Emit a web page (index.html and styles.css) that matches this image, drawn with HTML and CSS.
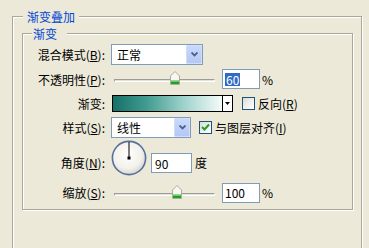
FILE: index.html
```html
<!DOCTYPE html>
<html lang="zh-CN">
<head>
    <meta charset="UTF-8">
    <title>渐变叠加</title>
    <link rel="stylesheet" href="styles.css">
</head>
<body>

    <fieldset class="group outer">
        <legend>渐变叠加</legend>

        <fieldset class="group inner">
            <legend>渐变</legend>

            <div class="form">
                <!-- 混合模式 -->
                <label class="lbl">混合模式(<u>B</u>):</label>
                <div class="ctl">
                    <div class="combo combo-blend">
                        <span class="combo-text">正常</span>
                        <span class="combo-btn">
                            <svg width="7" height="5" viewBox="0 0 7 5"><polyline points="0.5,0.5 3.5,3.5 6.5,0.5" fill="none" stroke="#4d6185" stroke-width="1.8"/></svg>
                        </span>
                    </div>
                </div>

                <!-- 不透明性 -->
                <label class="lbl">不透明性(<u>P</u>):</label>
                <div class="ctl">
                    <div class="slider">
                        <div class="track"></div>
                        <svg class="thumb thumb-opacity" width="10" height="14" viewBox="0 0 10 14">
                            <path d="M0.5,5 L5,0.5 L9.5,5 L9.5,13.5 L0.5,13.5 Z" fill="#f7f6f1" stroke="#a8ae9f"/>
                            <rect x="1" y="9" width="8" height="1.5" fill="#8fdc8f"/>
                            <rect x="1" y="10.5" width="8" height="2.5" fill="#21a121"/>
                        </svg>
                    </div>
                    <div class="edit"><span class="sel">60</span></div>
                    <span class="unit">%</span>
                </div>

                <!-- 渐变 -->
                <label class="lbl">渐变:</label>
                <div class="ctl">
                    <div class="grad">
                        <div class="grad-fill"></div>
                        <div class="grad-btn">
                            <svg width="5" height="3" viewBox="0 0 5 3"><path d="M0,0 L5,0 L2.5,3 Z" fill="#000"/></svg>
                        </div>
                    </div>
                    <span class="check"></span>
                    <span class="check-text">反向(<u>R</u>)</span>
                </div>

                <!-- 样式 -->
                <label class="lbl">样式(<u>S</u>):</label>
                <div class="ctl">
                    <div class="combo combo-style">
                        <span class="combo-text">线性</span>
                        <span class="combo-btn">
                            <svg width="7" height="5" viewBox="0 0 7 5"><polyline points="0.5,0.5 3.5,3.5 6.5,0.5" fill="none" stroke="#4d6185" stroke-width="1.8"/></svg>
                        </span>
                    </div>
                    <span class="check check-on">
                        <svg width="11" height="11" viewBox="0 0 11 11"><polyline points="2,5 4.5,7.5 9,2.5" fill="none" stroke="#21a121" stroke-width="2"/></svg>
                    </span>
                    <span class="check-text">与图层对齐(<u>I</u>)</span>
                </div>

                <!-- 角度 -->
                <label class="lbl lbl-angle">角度(<u>N</u>):</label>
                <div class="ctl ctl-angle">
                    <svg class="dial" width="36" height="36" viewBox="0 0 36 36">
                        <defs>
                            <radialGradient id="dialFill" cx="45%" cy="40%" r="60%">
                                <stop offset="0" stop-color="#ffffff"/>
                                <stop offset="0.7" stop-color="#f2f1ea"/>
                                <stop offset="1" stop-color="#d9d8cf"/>
                            </radialGradient>
                        </defs>
                        <circle cx="18" cy="18" r="16.6" fill="url(#dialFill)" stroke="#56709e" stroke-width="1.6"/>
                        <line x1="18" y1="18" x2="18" y2="2" stroke="#000" stroke-width="1"/>
                        <rect x="16.5" y="16.5" width="3" height="3" fill="#000"/>
                    </svg>
                    <div class="edit edit-angle">90</div>
                    <span class="unit-deg">度</span>
                </div>

                <!-- 缩放 -->
                <label class="lbl">缩放(<u>S</u>):</label>
                <div class="ctl">
                    <div class="slider">
                        <div class="track"></div>
                        <svg class="thumb thumb-scale" width="10" height="14" viewBox="0 0 10 14">
                            <path d="M0.5,5 L5,0.5 L9.5,5 L9.5,13.5 L0.5,13.5 Z" fill="#f7f6f1" stroke="#a8ae9f"/>
                            <rect x="1" y="9" width="8" height="1.5" fill="#8fdc8f"/>
                            <rect x="1" y="10.5" width="8" height="2.5" fill="#21a121"/>
                        </svg>
                    </div>
                    <div class="edit">100</div>
                    <span class="unit">%</span>
                </div>
            </div>
        </fieldset>
    </fieldset>

</body>
</html>
```

FILE: styles.css
```css
body {
    margin: 0;
    background-color: #ece9d8;
    font-family: "Noto Sans CJK SC", "DejaVu Sans", sans-serif;
    font-size: 12px;
    line-height: 13px;
    color: #000;
    overflow: hidden;
}

u {
    text-decoration: underline;
    text-underline-offset: 1px;
}

/* group boxes */
.group {
    border: 1px solid #aca899;
    box-shadow: 1px 1px 0 #fff, inset 1px 1px 0 #fff;
    padding: 0;
    min-inline-size: 0;
}

.group legend {
    color: #0046d5;
    background-color: #ece9d8;
    line-height: 13px;
}

.outer {
    margin: 10px 7px 0 12px;
    padding-bottom: 80px;
}

.outer > legend {
    margin-left: 10px;
    padding: 0 4px;
}

.inner {
    margin: 4px 8px 0 9px;
}

.inner > legend {
    margin-left: 9px;
    padding: 0 10px 0 1px;
}

/* form grid */
.form {
    display: grid;
    grid-template-columns: 82px 1fr;
    grid-template-rows: 25px 24px 24px 25px 36px 33px;
    column-gap: 6px;
    align-items: center;
    padding-top: 2px;
}

.lbl {
    text-align: right;
    white-space: nowrap;
}

.ctl {
    display: flex;
    align-items: center;
    white-space: nowrap;
}

/* combo boxes */
.combo {
    box-sizing: border-box;
    height: 21px;
    border: 1px solid #7f9db9;
    background-color: #fff;
    display: flex;
    align-items: center;
    justify-content: space-between;
}

.combo-blend {
    width: 92px;
}

.combo-style {
    width: 80px;
}

.combo-text {
    padding-left: 5px;
}

.combo-btn {
    box-sizing: border-box;
    width: 16px;
    height: 19px;
    border: 1px solid #d2def8;
    border-radius: 1px;
    background: linear-gradient(#c9d8fc, #b4c8f6);
    display: flex;
    align-items: center;
    justify-content: center;
}

/* sliders */
.slider {
    position: relative;
    width: 101px;
    height: 14px;
    margin-left: 3px;
    margin-right: 7px;
}

.track {
    margin-top: 7px;
    height: 1px;
    border: 1px solid #9d9c99;
    border-color: #9d9c99 #fff #fff #9d9c99;
    border-radius: 1px;
    background-color: #e4e2d7;
}

.thumb {
    position: absolute;
    top: -1px;
}

.thumb-opacity {
    left: 56px;
}

.thumb-scale {
    left: 58px;
}

/* edit boxes */
.edit {
    box-sizing: border-box;
    width: 38px;
    height: 20px;
    border: 1px solid #7f9db9;
    background-color: #fff;
    padding-left: 2px;
    display: flex;
    align-items: center;
}

.sel {
    background-color: #316ac5;
    color: #fff;
    padding: 0 1px;
}

.unit {
    margin-left: 2px;
}

/* gradient picker */
.grad {
    box-sizing: border-box;
    width: 121px;
    height: 17px;
    margin-left: 1px;
    border: 1px solid #000;
    display: flex;
}

.grad-fill {
    flex: 1;
    background: linear-gradient(to right, #167068, #3f9a8f 30%, #9dd3cc 65%, #f6fbfa);
}

.grad-btn {
    width: 9px;
    border-left: 1px solid #000;
    background-color: #fff;
    display: flex;
    align-items: center;
    justify-content: center;
}

/* check boxes */
.check {
    box-sizing: border-box;
    width: 13px;
    height: 13px;
    margin-left: 9px;
    border: 1px solid #1c5180;
    background: linear-gradient(135deg, #dcdcd7, #fff);
    display: flex;
    align-items: center;
    justify-content: center;
}

.check-on {
    margin-left: 8px;
}

.check-text {
    margin-left: 3px;
}

/* angle */
.lbl-angle {
    align-self: end;
    margin-bottom: 7px;
}

.ctl-angle {
    align-self: stretch;
    align-items: flex-start;
}

.dial {
    display: block;
}

.edit-angle {
    width: 41px;
    margin-left: 4px;
    margin-top: 13px;
    padding-left: 3px;
}

.unit-deg {
    margin-left: 3px;
    margin-top: 16px;
}
```
